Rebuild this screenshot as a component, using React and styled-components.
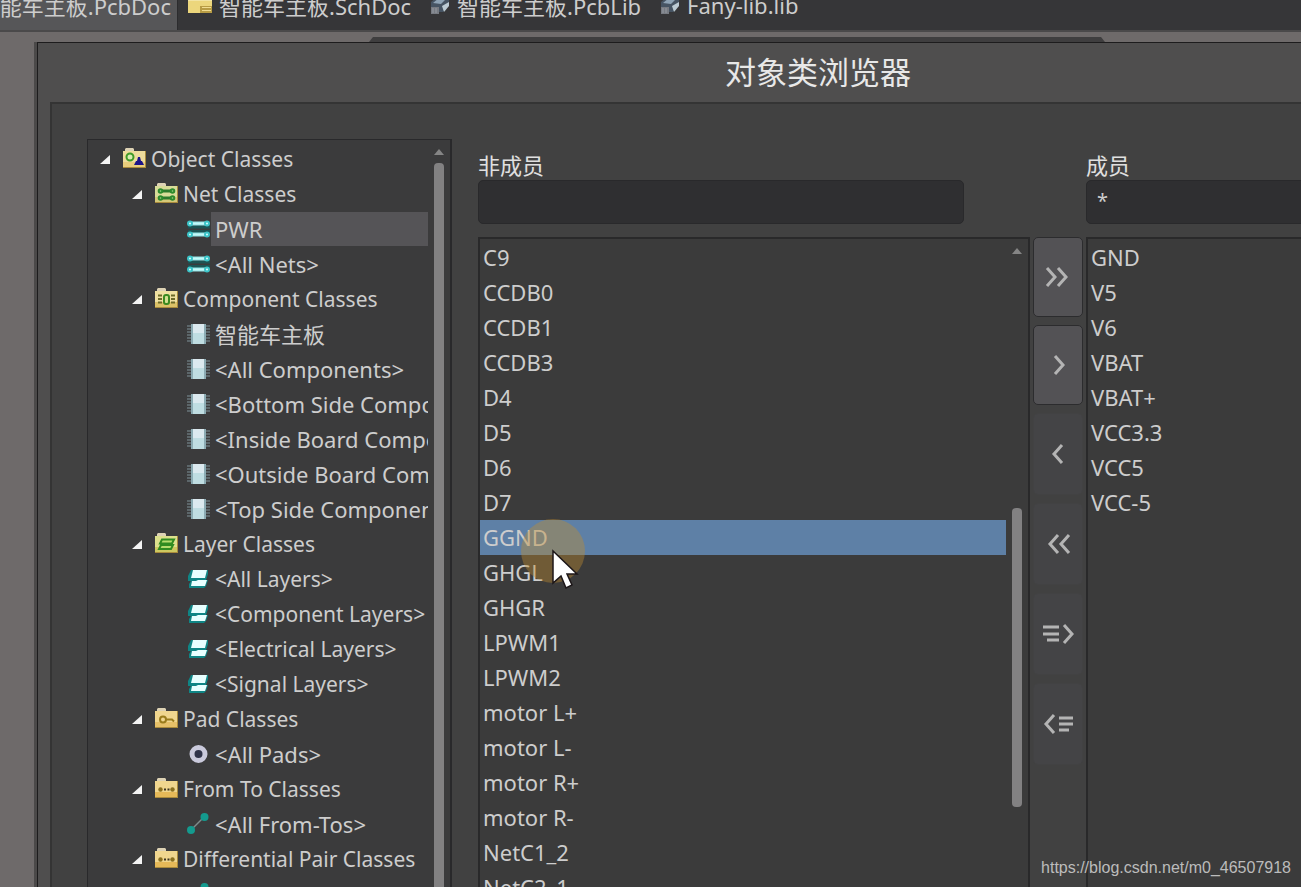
import { useState } from "react";
import styled, { createGlobalStyle } from "styled-components";

const tabs = [
  { name: "智能车主板.PcbDoc", icon: null },
  { name: "智能车主板.SchDoc", icon: "sch" },
  { name: "智能车主板.PcbLib", icon: "lib" },
  { name: "Fany-lib.lib", icon: "lib" },
];

const tree = [
  { level: 0, icon: "object", label: "Object Classes" },
  { level: 1, icon: "netFolder", label: "Net Classes" },
  { level: 2, icon: "net", label: "PWR" },
  { level: 2, icon: "net", label: "<All Nets>" },
  { level: 1, icon: "componentFolder", label: "Component Classes" },
  { level: 2, icon: "component", label: "智能车主板" },
  { level: 2, icon: "component", label: "<All Components>" },
  { level: 2, icon: "component", label: "<Bottom Side Components>" },
  { level: 2, icon: "component", label: "<Inside Board Components>" },
  { level: 2, icon: "component", label: "<Outside Board Components>" },
  { level: 2, icon: "component", label: "<Top Side Components>" },
  { level: 1, icon: "layerFolder", label: "Layer Classes" },
  { level: 2, icon: "layer", label: "<All Layers>" },
  { level: 2, icon: "layer", label: "<Component Layers>" },
  { level: 2, icon: "layer", label: "<Electrical Layers>" },
  { level: 2, icon: "layer", label: "<Signal Layers>" },
  { level: 1, icon: "padFolder", label: "Pad Classes" },
  { level: 2, icon: "pad", label: "<All Pads>" },
  { level: 1, icon: "pairFolder", label: "From To Classes" },
  { level: 2, icon: "fromTo", label: "<All From-Tos>" },
  { level: 1, icon: "pairFolder", label: "Differential Pair Classes" },
  { level: 2, icon: "fromTo", label: "" },
];

const nonMembers = [
  "C9",
  "CCDB0",
  "CCDB1",
  "CCDB3",
  "D4",
  "D5",
  "D6",
  "D7",
  "GGND",
  "GHGL",
  "GHGR",
  "LPWM1",
  "LPWM2",
  "motor L+",
  "motor L-",
  "motor R+",
  "motor R-",
  "NetC1_2",
  "NetC2_1",
];

const members = ["GND", "V5", "V6", "VBAT", "VBAT+", "VCC3.3", "VCC5", "VCC-5"];

const moveButtons = [
  { label: "Add all", icon: "M5 3l8 9-8 9M16 3l8 9-8 9", enabled: true },
  { label: "Add", icon: "M13 3l8 9-8 9", enabled: true },
  { label: "Remove", icon: "M20 3l-8 9 8 9" },
  { label: "Remove all", icon: "M16 3l-8 9 8 9M27 3l-8 9 8 9" },
  {
    label: "Add selected",
    icon: "M1 5h16M1 12h16M5 18h12M22 3l8 9-8 9",
  },
  {
    label: "Remove selected",
    icon: "M12 3l-8 9 8 9M17 6h14M17 12h14M17 18h10",
  },
];

function Folder({ top = "#efe0a0", bottom = "#dcc268", children }) {
  return (
    <>
      <path d="M2 4V2l1-1h7l1 1v2z" fill="#ddd2b4" />
      <rect x="0" y="4" width="23" height="17" fill={bottom} />
      <rect x="0" y="4" width="22" height="11" fill={top} />
      <path d="M0 20.500h23M22.500 4v17" stroke="#a98a3c" fill="none" />
      {children}
    </>
  );
}

const treeIcons = {
  object: (
    <Folder top="#eedc9c" bottom="#e8cd7c">
      <circle cx="7" cy="10" r="3.500" fill="#d8ecb0" stroke="#3f9a28" strokeWidth="2" />
      <path d="M11 18l2-4h1l1-4h2l1 4h1l2 4z" fill="#1c1488" />
    </Folder>
  ),
  netFolder: (
    <Folder top="#d8dc98" bottom="#d4c878">
      <path d="M6 9h11M6 16h11" stroke="#2c7a2c" strokeWidth="3" />
      <g fill="#9cd080" stroke="#2c8a2c" strokeWidth="2">
        <circle cx="5.500" cy="9" r="1.800" />
        <circle cx="17.500" cy="9" r="1.800" />
        <circle cx="5.500" cy="16" r="1.800" />
        <circle cx="17.500" cy="16" r="1.800" />
      </g>
    </Folder>
  ),
  componentFolder: (
    <Folder>
      <path
        d="M3 8.500h4M3 12h4M3 15.500h4M16 8.500h4M16 12h4M16 15.500h4"
        stroke="#6c6a28"
        strokeWidth="2"
      />
      <rect x="9" y="8" width="5" height="9" rx="2" fill="#d4e090" stroke="#3a8a20" strokeWidth="2" />
    </Folder>
  ),
  layerFolder: (
    <Folder top="#dce08c" bottom="#ccc860">
      <path
        d="M7 7.500h12l-2 4H5zM6 13h12l-2 4H4z"
        fill="#b4dc6c"
        stroke="#2f8c20"
        strokeWidth="2"
      />
    </Folder>
  ),
  padFolder: (
    <Folder top="#f0d68e" bottom="#e6c068">
      <circle cx="8" cy="12.500" r="3" fill="none" stroke="#9a7c1c" strokeWidth="2" />
      <path d="M11 12.500h6l2 2" stroke="#9a7c1c" strokeWidth="2" fill="none" />
    </Folder>
  ),
  pairFolder: (
    <Folder top="#f0d68e" bottom="#e6b958">
      <circle cx="5.500" cy="12.500" r="2.200" fill="#8a7020" />
      <circle cx="17.500" cy="12.500" r="2.200" fill="#8a7020" />
      <path d="M9 12.500h2M12.500 12.500h2" stroke="#3c3420" strokeWidth="2" />
    </Folder>
  ),
  net: (
    <>
      <path d="M1 10h22M1 14.500h22" stroke="#1c5454" strokeWidth="3" />
      <path d="M2 6.500h19M2 17.500h19" stroke="#8fe4e6" strokeWidth="4" />
      <path d="M5 6.500h13M5 17.500h13" stroke="#c4f8f8" strokeWidth="2" />
      <g fill="#d4ffff" stroke="#3cc4c8" strokeWidth="2">
        <circle cx="3" cy="6.500" r="2" />
        <circle cx="20" cy="6.500" r="2" />
        <circle cx="3" cy="17.500" r="2" />
        <circle cx="20" cy="17.500" r="2" />
      </g>
    </>
  ),
  component: (
    <>
      <path
        d="M0 4h5M0 7h5M0 10h5M0 13h5M0 16h5M0 19h5M18 4h5M18 7h5M18 10h5M18 13h5M18 16h5M18 19h5"
        stroke="#7f9298"
      />
      <rect x="4" y="2" width="15" height="20" fill="#8cacb4" />
      <rect x="6" y="2" width="11" height="20" fill="#bfdde2" />
      <rect x="6" y="2" width="11" height="9" fill="#dbe9ef" />
    </>
  ),
  layer: (
    <>
      <path d="M4 3h17v4l-2 6h2l-2 6-2 2H2v-4l2-3H1V9z" fill="#0f8585" />
      <path d="M6 3h14l-2 8H4zM5 14h4l2-1h9l-2 6H4z" fill="#e8ffff" />
    </>
  ),
  pad: <circle cx="11.500" cy="12" r="6.500" fill="#30344a" stroke="#cacadc" strokeWidth="5" />,
  fromTo: (
    <>
      <path d="M4 18L17 5" stroke="#7f8c8c" strokeWidth="1.500" />
      <circle cx="4" cy="18" r="4" fill="#149a8e" />
      <circle cx="17.500" cy="5" r="4" fill="#149a8e" />
    </>
  ),
};

function TabIcon({ type }) {
  if (type === "sch") {
    return (
      <svg width="24" height="24" viewBox="0 0 24 24">
        <path d="M0 0h24v20H0z" fill="#ecd67c" />
        <path d="M0 0h24v8H0z" fill="#f2e4a4" />
        <path d="M12 13h12v7H12z" fill="#b89c44" />
        <path d="M14 14.500h9M14 17.500h9" stroke="#f0dc90" />
      </svg>
    );
  }
  return (
    <svg width="20" height="24" viewBox="0 0 20 24">
      <path d="M1 9l6-5h12v8l-6 7H1z" fill="#465463" />
      <path d="M3 10l6-5h8l-6 6z" fill="#8ea3b5" />
      <path d="M1 14h8v7H1z" fill="#777b82" />
      <path d="M3 15v5M6 15v5" stroke="#969ba2" />
      <path d="M12 13l7-4v4l-5 6z" fill="#bccbd4" />
    </svg>
  );
}

function App() {
  const [selectedClass, setSelectedClass] = useState("PWR");
  const [selectedNet, setSelectedNet] = useState("GGND");
  const [nonMemberFilter, setNonMemberFilter] = useState("");
  const [memberFilter, setMemberFilter] = useState("*");

  return (
    <Screen>
      <GlobalStyle />
      <TabBar>
        {tabs.map((tab, i) => (
          <Tab key={tab.name} type="button" $active={i === 0}>
            {tab.icon && <TabIcon type={tab.icon} />}
            {tab.name}
          </Tab>
        ))}
      </TabBar>
      <Workspace>
        <DockEdge />
        <Dialog>
          <Title>对象类浏览器</Title>
          <Content>
            <TreePanel>
              <TreeList>
                {tree.map((node) => (
                  <TreeRow key={node.label} $level={node.level}>
                    <Expander>
                      {node.level < 2 && (
                        <ExpandButton type="button" aria-label="Collapse">
                          <svg width="12" height="12" viewBox="0 0 12 12">
                            <path d="M11 2v9H1z" fill="#f4f4f4" />
                          </svg>
                        </ExpandButton>
                      )}
                    </Expander>
                    <svg width="24" height="24" viewBox="0 0 24 24">
                      {treeIcons[node.icon]}
                    </svg>
                    {node.label && (
                      <TreeLabel
                        type="button"
                        $small={node.level < 2 || node.icon === "layer"}
                        $selected={node.label === selectedClass}
                        onClick={() => setSelectedClass(node.label)}
                      >
                        {node.label}
                      </TreeLabel>
                    )}
                  </TreeRow>
                ))}
              </TreeList>
              <ScrollBar>
                <ScrollArrow />
                <ScrollThumb $long />
              </ScrollBar>
            </TreePanel>

            <Column>
              <FieldLabel htmlFor="non-members">非成员</FieldLabel>
              <Filter
                id="non-members"
                type="text"
                $short
                value={nonMemberFilter}
                onChange={(e) => setNonMemberFilter(e.target.value)}
              />
              <ListPanel>
                <NetList>
                  {nonMembers.map((net) => (
                    <NetRow
                      key={net}
                      $selected={net === selectedNet}
                      onClick={() => setSelectedNet(net)}
                    >
                      {net}
                      {net === "GGND" && (
                        <Pointer>
                          <svg width="66" height="72" viewBox="0 0 66 72">
                            <circle cx="33" cy="32" r="32" fill="#c08c30" fillOpacity="0.400" />
                            <path
                              d="M33 32v32l8-7 5 12 6-3-5-11h10z"
                              fill="#fff"
                              stroke="#1c1618"
                              strokeWidth="1.500"
                            />
                          </svg>
                        </Pointer>
                      )}
                    </NetRow>
                  ))}
                </NetList>
                <ScrollBar>
                  <ScrollArrow />
                  <ScrollSpace />
                  <ScrollThumb />
                </ScrollBar>
              </ListPanel>
            </Column>

            <MoveButtons>
              {moveButtons.map((button) => (
                <MoveButton
                  key={button.label}
                  type="button"
                  aria-label={button.label}
                  disabled={!button.enabled}
                >
                  <svg width="32" height="24" viewBox="0 0 32 24">
                    <path d={button.icon} fill="none" stroke="#b4b4b4" strokeWidth="3" />
                  </svg>
                </MoveButton>
              ))}
            </MoveButtons>

            <Column>
              <FieldLabel htmlFor="members">成员</FieldLabel>
              <Filter
                id="members"
                type="text"
                value={memberFilter}
                onChange={(e) => setMemberFilter(e.target.value)}
              />
              <ListPanel>
                <NetList>
                  {members.map((net) => (
                    <NetRow key={net}>{net}</NetRow>
                  ))}
                </NetList>
              </ListPanel>
            </Column>
          </Content>
        </Dialog>
      </Workspace>
      <Watermark>https://blog.csdn.net/m0_46507918</Watermark>
    </Screen>
  );
}

const GlobalStyle = createGlobalStyle`
  * {
    box-sizing: border-box;
  }

  body {
    margin: 0;
    overflow: hidden;
    background: #6e6a6a;
    color: #cdcdcd;
    font-family: "Noto Sans", "Noto Sans CJK SC", sans-serif;
    font-size: 22px;
  }

  button,
  input {
    margin: 0;
    padding: 0;
    border: none;
    background: none;
    color: inherit;
    font: inherit;
  }

  svg {
    display: block;
    flex-shrink: 0;
  }
`;

const Screen = styled.div`
  position: relative;
  display: flex;
  flex-direction: column;
  height: 100vh;
  overflow: hidden;
`;

const TabBar = styled.nav`
  display: flex;
  align-items: flex-end;
  flex-shrink: 0;
  height: 32px;
  overflow: hidden;
  background: #363638;
  border-bottom: 2px solid #4a494a;
`;

const Tab = styled.button`
  display: flex;
  align-items: center;
  justify-content: flex-end;
  flex-shrink: 0;
  gap: 7px;
  width: ${(props) => (props.$active ? "178px" : "auto")};
  height: 50px;
  padding: 0 ${(props) => (props.$active ? "6px" : "9px")} 0 10px;
  background: ${(props) => (props.$active ? "#565658" : "transparent")};
  border-right: ${(props) => (props.$active ? "1px solid #2c2c2e" : "none")};
  white-space: nowrap;
`;

const Workspace = styled.main`
  flex: 1;
  display: flex;
  flex-direction: column;
  min-height: 0;
  padding: 5px 0 0 37px;
`;

const DockEdge = styled.div`
  flex-shrink: 0;
  width: 736px;
  height: 5px;
  margin-left: 332px;
  background: #3f3e3f;
  clip-path: polygon(4px 0, 732px 0, 100% 100%, 0 100%);
`;

/* the dialog is wider than the window and runs out at the right */
const Dialog = styled.section`
  flex: 1;
  display: flex;
  flex-direction: column;
  min-height: 0;
  margin-right: -285px;
  background: #4f4e4e;
  border-left: 1px solid #1d1c1d;
  border-top: 1px solid #1d1c1d;
  box-shadow: -3px 0 #4b4949;
  padding-left: 12px;
`;

const Title = styled.h1`
  flex-shrink: 0;
  margin: 0;
  font-size: 31px;
  font-weight: 400;
  line-height: 59px;
  text-align: center;
  color: #e8e8e8;
`;

const Content = styled.div`
  flex: 1;
  display: grid;
  grid-template-columns: 388px 552px 50px 1fr;
  grid-template-rows: minmax(0, 1fr);
  column-gap: 3px;
  min-height: 0;
  padding: 35px 35px 0;
  background: #414141;
  border-left: 2px solid #343434;
  border-top: 2px solid #343434;
`;

const TreePanel = styled.div`
  display: flex;
  min-height: 0;
  margin-right: 23px;
  overflow: hidden;
  background: #3b3b3c;
  border: 1px solid #29292b;
  border-right-width: 2px;
  border-bottom: none;
`;

const TreeList = styled.ul`
  flex: 1;
  min-width: 0;
  margin: 0;
  padding: 1px 0 0;
  list-style: none;
`;

const TreeRow = styled.li`
  display: flex;
  align-items: center;
  height: 35px;
  padding-left: ${(props) => 11 + props.$level * 32}px;
`;

const Expander = styled.span`
  flex-shrink: 0;
  width: 24px;
`;

const ExpandButton = styled.button`
  display: block;
`;

const TreeLabel = styled.button`
  flex: 1;
  min-width: 0;
  height: 34px;
  padding-left: 4px;
  overflow: hidden;
  background: ${(props) => (props.$selected ? "#555457" : "transparent")};
  font-size: ${(props) => (props.$small ? "21px" : "22px")};
  line-height: 34px;
  text-align: left;
  white-space: nowrap;
`;

const ScrollBar = styled.div`
  display: flex;
  flex-direction: column;
  align-items: center;
  flex-shrink: 0;
  width: 22px;
  padding-top: 9px;
`;

const ScrollArrow = styled.span`
  border: 5px solid transparent;
  border-top: none;
  border-bottom: 6px solid #858585;
`;

const ScrollSpace = styled.span`
  flex: 254 1 0;
`;

const ScrollThumb = styled.span`
  flex: ${(props) => (props.$long ? "1" : "298 1 0")};
  width: 10px;
  margin-top: ${(props) => (props.$long ? "8px" : "0")};
  margin-bottom: ${(props) => (props.$long ? "0" : "80px")};
  border-radius: ${(props) => (props.$long ? "4px 4px 0 0" : "4px")};
  background: #828182;
`;

const Column = styled.div`
  display: flex;
  flex-direction: column;
  min-width: 0;
  min-height: 0;
`;

const FieldLabel = styled.label`
  height: 41px;
  padding-top: 13px;
  line-height: 26px;
  color: #e0e0e0;
`;

const Filter = styled.input`
  flex-shrink: 0;
  width: ${(props) => (props.$short ? "88%" : "100%")};
  height: 44px;
  margin-bottom: 13px;
  padding: 0 10px 4px;
  background: #2f2f31;
  border: 1px solid #29292b;
  border-radius: 5px;
  outline: none;
  font-size: 20px;
`;

const ListPanel = styled.div`
  flex: 1;
  display: flex;
  min-height: 0;
  overflow: hidden;
  background: #3b3b3b;
  border: 2px solid #29292a;
  border-bottom: none;
`;

const NetList = styled.ul`
  flex: 1;
  min-width: 0;
  margin: 0;
  padding: 1px 0 0;
  list-style: none;
`;

const NetRow = styled.li`
  position: relative;
  height: 35px;
  padding-left: 3px;
  background: ${(props) => (props.$selected ? "#5e80a6" : "transparent")};
  line-height: 35px;
  white-space: nowrap;
`;

const Pointer = styled.span`
  position: absolute;
  z-index: 1;
  top: -1px;
  left: 40px;
  pointer-events: none;
`;

const MoveButtons = styled.div`
  display: flex;
  flex-direction: column;
  gap: 8px;
  padding-top: 98px;
`;

const MoveButton = styled.button`
  display: flex;
  align-items: center;
  justify-content: center;
  flex-shrink: 0;
  height: 80px;
  background: #535255;
  border: 1px solid #2c2c2e;
  border-radius: 5px;

  &:disabled {
    height: 82px;
    background: #444446;
    border-color: #424243;
  }
`;

const Watermark = styled.footer`
  position: absolute;
  right: 10px;
  bottom: 10px;
  color: #bcbcbc;
  font-family: "Liberation Sans", sans-serif;
  font-size: 16px;
  line-height: 18px;
`;

export default App;
